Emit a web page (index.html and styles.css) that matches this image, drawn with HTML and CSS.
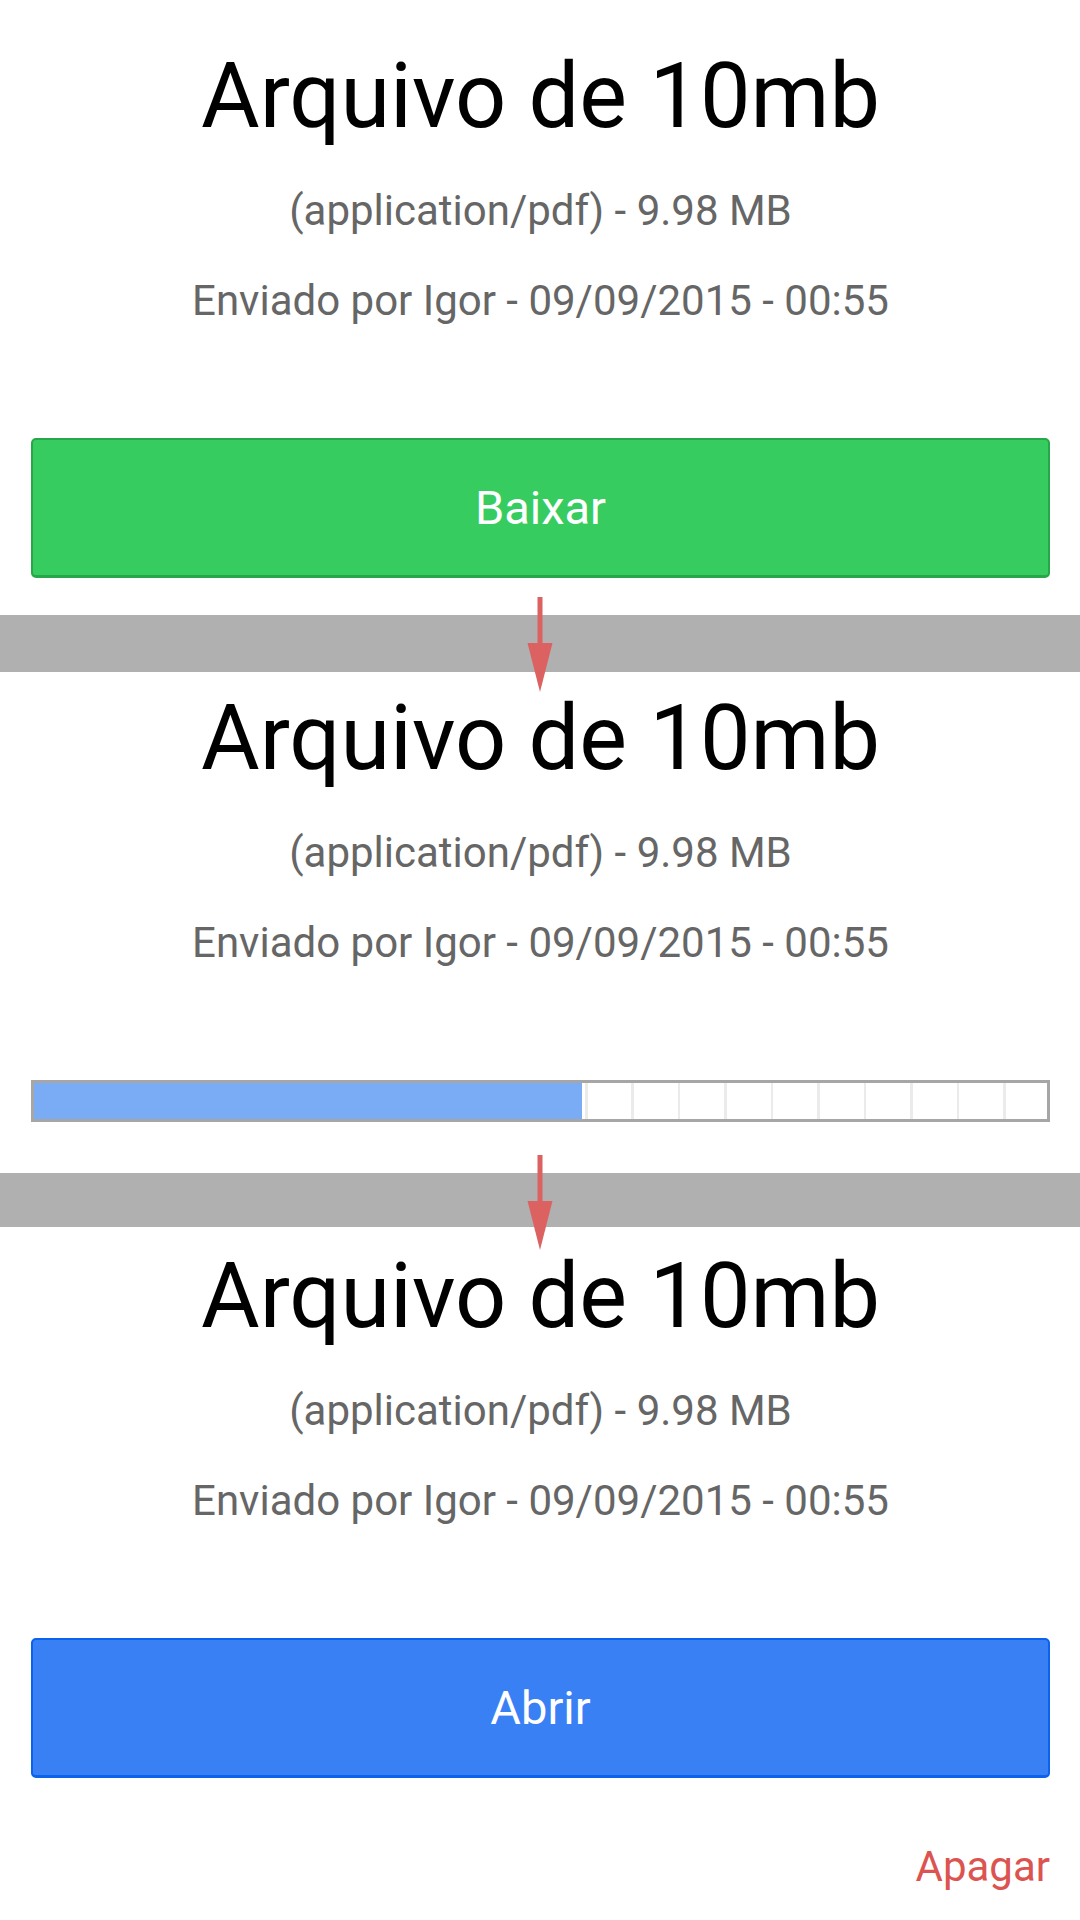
FILE: index.html
```html
<!DOCTYPE html>
<html lang="pt">
<head>
<meta charset="utf-8">
<title>Arquivo de 10mb</title>
<link rel="stylesheet" href="styles.css">
</head>
<body>
<main class="page">
  <section class="file file-first">
    <h1 class="file-title">Arquivo de 10mb</h1>
    <p class="file-meta file-type">(application/pdf) - 9.98 MB</p>
    <p class="file-meta file-sender">Enviado por Igor - 09/09/2015 - 00:55</p>
    <button class="btn btn-download">Baixar</button>
  </section>

  <div class="divider divider-first">
    <svg class="arrow" width="26" height="95" viewBox="0 0 26 95"><rect x="10.5" y="0" width="5" height="47" fill="#dc6262"/><polygon points="0.5,46 25.5,46 13,95" fill="#dc6262"/></svg>
  </div>

  <section class="file file-second">
    <h1 class="file-title">Arquivo de 10mb</h1>
    <p class="file-meta file-type">(application/pdf) - 9.98 MB</p>
    <p class="file-meta file-sender">Enviado por Igor - 09/09/2015 - 00:55</p>
    <div class="progress">
      <div class="progress-fill" style="width: 54.1%"></div>
      <div class="progress-rest"></div>
    </div>
  </section>

  <div class="divider divider-second">
    <svg class="arrow" width="26" height="95" viewBox="0 0 26 95"><rect x="10.5" y="0" width="5" height="47" fill="#dc6262"/><polygon points="0.5,46 25.5,46 13,95" fill="#dc6262"/></svg>
  </div>

  <section class="file file-third">
    <h1 class="file-title">Arquivo de 10mb</h1>
    <p class="file-meta file-type">(application/pdf) - 9.98 MB</p>
    <p class="file-meta file-sender">Enviado por Igor - 09/09/2015 - 00:55</p>
    <button class="btn btn-open">Abrir</button>
    <div class="actions">
      <a class="delete-link">Apagar</a>
    </div>
  </section>
</main>
</body>
</html>
```

FILE: styles.css
```css
* {
  box-sizing: border-box;
}

html, body {
  margin: 0;
  padding: 0;
  background: #ffffff;
}

body {
  font-family: Roboto, "Liberation Sans", Arial, sans-serif;
  width: 1080px;
  height: 1920px;
  overflow: hidden;
}

.page {
  display: flex;
  flex-direction: column;
}

.file {
  display: flex;
  flex-direction: column;
  align-items: center;
  padding: 0 30px 0 31px;
}

.file-first {
  padding-top: 44px;
}

.file-second {
  padding-top: 13.5px;
}

.file-third {
  padding-top: 16.5px;
}

.file-title {
  margin: 0 0 36px;
  font-size: 90px;
  line-height: 106px;
  font-weight: 400;
  color: #000000;
  white-space: nowrap;
}

.file-meta {
  margin: 0;
  font-size: 42px;
  line-height: 50px;
  color: #666666;
  white-space: nowrap;
}

.file-type {
  margin-bottom: 40px;
}

.file-sender {
  margin-bottom: 112px;
}

.file-second .file-sender {
  margin-bottom: 112.5px;
}

.file-third .file-sender {
  margin-bottom: 112.5px;
}

.btn {
  display: flex;
  align-items: center;
  justify-content: center;
  width: 100%;
  height: 140px;
  margin: 0;
  padding: 0;
  border-radius: 5px;
  font-family: Roboto, "Liberation Sans", Arial, sans-serif;
  font-size: 47px;
  color: #ffffff;
  border-style: solid;
  border-width: 2px 2px 3px;
}

.btn-download {
  background: #36cc5f;
  border-color: #28a74a;
}

.btn-open {
  background: #3a80f5;
  border-color: #0b62ec;
}

.divider {
  position: relative;
  background: #b0b0b0;
}

.divider-first {
  margin-top: 37px;
  height: 57px;
}

.divider-second {
  margin-top: 51px;
  height: 54px;
}

.arrow {
  position: absolute;
  left: 527px;
  top: -18px;
  display: block;
}

.progress {
  display: flex;
  width: 100%;
  height: 42px;
  border: 3px solid #a6a6a6;
  background: #ffffff;
}

.progress-fill {
  height: 100%;
  background: #7aabf5;
}

.progress-rest {
  flex: 1;
  height: 100%;
  background: repeating-linear-gradient(to right,
    transparent 0 3px,
    #ebebeb 3px 5.5px,
    transparent 5.5px 46.45px);
}

.actions {
  width: 100%;
  display: flex;
  justify-content: flex-end;
  margin-top: 63.5px;
  padding-right: 0;
}

.delete-link {
  font-size: 42px;
  line-height: 50px;
  color: #dc5450;
  text-decoration: none;
}
```
